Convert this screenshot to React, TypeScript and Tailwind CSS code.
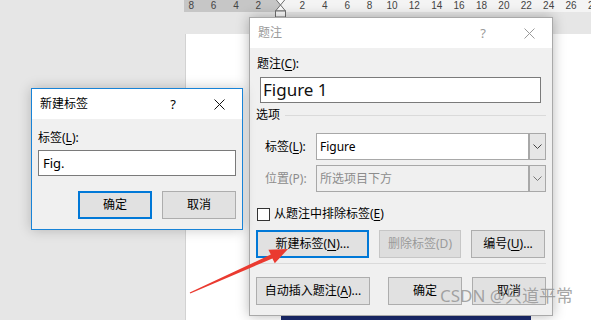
import type { ReactNode } from 'react'

const Acc = ({ children }: { children: ReactNode }) => (
  <span className="underline underline-offset-[2px] decoration-[1px]">{children}</span>
)

function CloseX({ color }: { color: string }) {
  return (
    <svg width="11" height="11" viewBox="0 0 11 11">
      <path d="M0.5 0.5 L10.5 10.5 M10.5 0.5 L0.5 10.5" stroke={color} strokeWidth="1" />
    </svg>
  )
}

function Caption({ title, active }: { title: string; active: boolean }) {
  const tone = active ? 'text-black' : 'text-[#9a9a9a]'
  return (
    <div className="flex items-center h-[30px] bg-white">
      <span className={`pl-[8px] flex-1 text-[12px] leading-[16px] ${tone}`}>{title}</span>
      <span className={`w-[46px] text-center text-[13px] leading-[16px] ${tone}`}>?</span>
      <span className="w-[46px] flex justify-center">
        <CloseX color={active ? '#111' : '#9a9a9a'} />
      </span>
    </div>
  )
}

function Button({
  children,
  width,
  focused,
  disabled,
}: {
  children: ReactNode
  width: string
  focused?: boolean
  disabled?: boolean
}) {
  const base = 'h-[28px] flex items-center justify-center text-[12px] leading-[16px]'
  const look = focused
    ? 'border-2 border-[#0078d7] bg-[#e1e1e1] text-black'
    : disabled
      ? 'border border-[#c6c6c6] bg-[#dddddd] text-[#9a9a9a]'
      : 'border border-[#adadad] bg-[#e1e1e1] text-black'
  return <div className={`${base} ${look} ${width}`}>{children}</div>
}

function Chevron({ color }: { color: string }) {
  return (
    <svg width="9" height="5" viewBox="0 0 9 5">
      <path d="M0.5 0.5 L4.5 4.5 L8.5 0.5" stroke={color} fill="none" strokeWidth="1" />
    </svg>
  )
}

function Combo({ value, disabled }: { value: string; disabled?: boolean }) {
  return (
    <div
      className={`w-[230px] h-[27px] flex border border-[#a8a8a8] ${disabled ? 'bg-[#f0f0f0]' : 'bg-white'}`}
    >
      <span
        className={`flex-1 pl-[3px] flex items-center text-[12px] leading-[16px] ${disabled ? 'text-[#8c8c8c]' : 'text-black'}`}
      >
        {value}
      </span>
      <span className="w-[17px] flex items-center justify-center bg-[#e6e6e6] border-l-2 border-[#a8a8a8]">
        <Chevron color={disabled ? '#777' : '#444'} />
      </span>
    </div>
  )
}

function Ruler() {
  const left = [8, 6, 4, 2]
  const right = [2, 4, 6, 8, 10, 12, 14, 16, 18, 20, 22, 24, 26, 28]
  return (
    <div className="flex h-[12px] ml-[184px] font-['Liberation_Sans',sans-serif] text-[10px] leading-[12px] text-[#444]">
      <div className="w-[96px] bg-[#c6c6c6] flex">
        <div className="flex -ml-[4px]">
          {left.map((n) => (
            <span key={n} className="w-[22.4px] text-center">
              {n}
            </span>
          ))}
        </div>
      </div>
      <div className="flex-1 bg-[#f4f4f4] flex pl-[11.2px] overflow-hidden">
        {right.map((n) => (
          <span key={n} className="w-[22.4px] shrink-0 text-center">
            {n}
          </span>
        ))}
      </div>
    </div>
  )
}

export default function App() {
  return (
    <div className="relative w-[591px] h-[320px] overflow-hidden bg-[#e6e6e6] font-['Noto_Sans','Noto_Sans_CJK_SC',sans-serif]">
      {/* word window behind */}
      <div className="flex flex-col h-full">
        <Ruler />
        <div className="h-[22px]" />
        <div className="flex-1 ml-[185px] bg-white border-l border-[#d2d2d2] flex flex-col">
          <div className="mt-auto ml-[95px] w-[250px] h-[4px] bg-[#1b2a6e]" />
        </div>
      </div>

      {/* indent marker */}
      <svg className="absolute left-[274px] top-0" width="13" height="18" viewBox="0 0 13 18">
        <path d="M1.5 -1 L11.5 -1 L6.5 5 Z" fill="#fafafa" stroke="#6f6f6f" />
        <path d="M6.5 5 L11.5 11 L1.5 11 Z" fill="#fafafa" stroke="#6f6f6f" />
        <rect x="1.5" y="11" width="10" height="6" fill="#fafafa" stroke="#6f6f6f" />
      </svg>

      {/* 题注 dialog */}
      <div className="absolute left-[249px] top-[17px] w-[304px] h-[299px] flex flex-col border border-[#a9a9a9] bg-[#f0f0f0] shadow-[0_0_12px_rgba(0,0,0,0.28)]">
        <Caption title="题注" active={false} />
        <div className="flex-1 flex flex-col pl-[7px] pr-[6px] text-[12px] leading-[16px] text-black">
          <div className="mt-[8px]">
            题注(<Acc>C</Acc>):
          </div>
          <div className="mt-[5px] ml-[3px] mr-[5px] h-[26px] bg-white border border-[#7a7a7a] flex items-center pl-[2px] text-[17px] leading-[20px] text-[#111]">
            Figure 1
          </div>
          <div className="mt-[4px] flex items-center -ml-[1px]">
            <span>选项</span>
            <span className="flex-1 ml-[5px] h-px bg-[#dadada]" />
          </div>
          <div className="mt-[10px] flex items-center pl-[8px]">
            <span className="w-[51px]">
              标签(<Acc>L</Acc>):
            </span>
            <Combo value="Figure" />
          </div>
          <div className="mt-[5px] flex items-center pl-[8px]">
            <span className="w-[51px] text-[#8c8c8c]">位置(P):</span>
            <Combo value="所选项目下方" disabled />
          </div>
          <div className="mt-[14px] flex items-center">
            <span className="w-[13px] h-[13px] border border-[#333] bg-white" />
            <span className="ml-[4px]">
              从题注中排除标签(<Acc>E</Acc>)
            </span>
          </div>
          <div className="mt-[8px] flex gap-[10px] -ml-[1px]">
            <Button width="w-[113px]" focused>
              新建标签(<Acc>N</Acc>)...
            </Button>
            <Button width="w-[82px]" disabled>
              删除标签(D)
            </Button>
            <Button width="w-[74px]">
              编号(<Acc>U</Acc>)...
            </Button>
          </div>
          <div className="mt-[5px] h-px bg-[#dadada] -ml-[1px]" />
          <div className="mt-[13px] flex -ml-[1px]">
            <Button width="w-[114px]">
              自动插入题注(<Acc>A</Acc>)...
            </Button>
            <div className="ml-[18px]">
              <Button width="w-[74px]">确定</Button>
            </div>
            <div className="ml-[10px]">
              <Button width="w-[74px]">取消</Button>
            </div>
          </div>
        </div>
      </div>

      {/* 新建标签 dialog */}
      <div className="absolute left-[31px] top-[88px] w-[212px] h-[142px] flex flex-col border border-[#1883d7] bg-[#f0f0f0] shadow-[0_0_12px_rgba(0,0,0,0.22)]">
        <Caption title="新建标签" active />
        <div className="flex-1 flex flex-col px-[6px] text-[12px] leading-[16px] text-black">
          <div className="mt-[11px]">
            标签(<Acc>L</Acc>):
          </div>
          <div className="mt-[4px] h-[26px] bg-white border border-[#7a7a7a] flex items-center pl-[4px] text-[13px] leading-[16px]">
            Fig.
          </div>
          <div className="mt-[15px] flex justify-end gap-[10px]">
            <Button width="w-[74px]" focused>
              确定
            </Button>
            <Button width="w-[74px]">取消</Button>
          </div>
        </div>
      </div>

      {/* red arrow */}
      <svg className="absolute left-0 top-0 pointer-events-none" width="591" height="320" viewBox="0 0 591 320">
        <polygon
          points="190.3,293.6 272.4,258.4 274.8,263.2 288,249 268.4,249.8 270.8,254.6 189.7,292.4"
          fill="#ea3a30"
        />
      </svg>

      {/* watermark */}
      <div className="absolute left-[440px] top-[285px] text-[17px] leading-[22px] text-[rgba(150,150,150,0.85)] whitespace-nowrap">
        CSDN @只道平常
      </div>
    </div>
  )
}
